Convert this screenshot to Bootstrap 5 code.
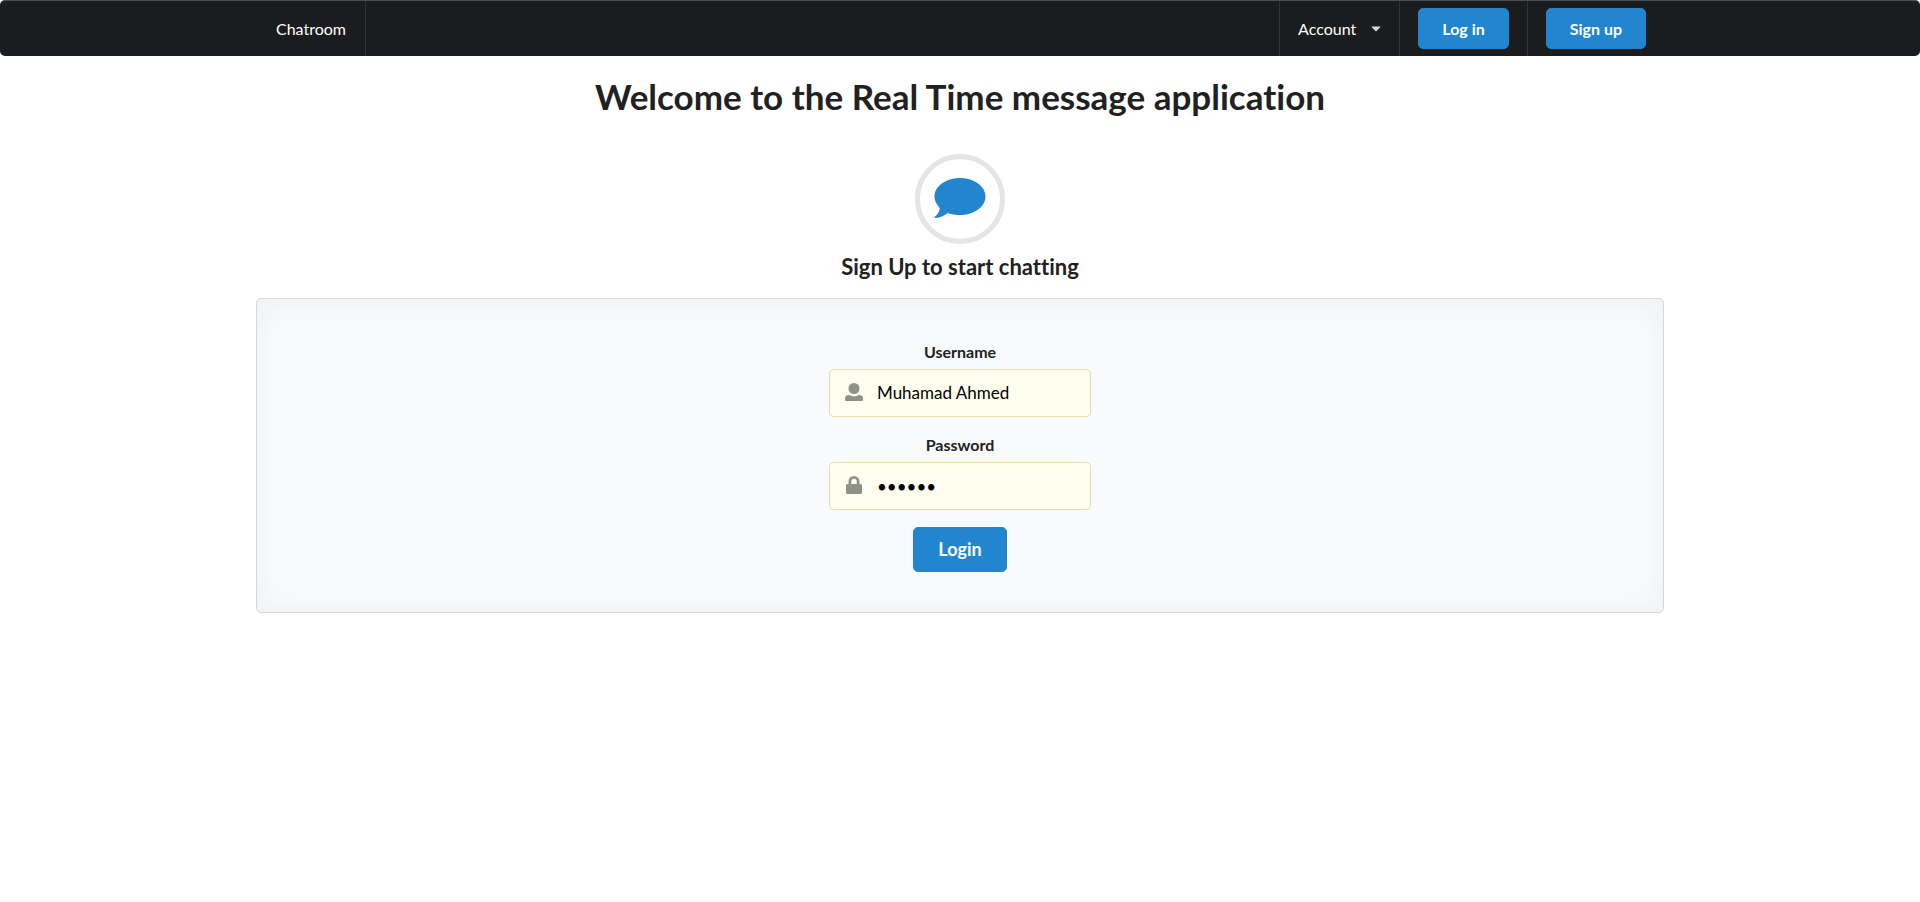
<!DOCTYPE html>
<html lang="en">
<head>
<meta charset="utf-8">
<meta name="viewport" content="width=device-width, initial-scale=1">
<title>Chatroom</title>
<link href="https://cdn.jsdelivr.net/npm/bootstrap@5.3.0/dist/css/bootstrap.min.css" rel="stylesheet">
<style>
  body { font-family: Lato, "Liberation Sans", sans-serif; color: #212121; font-variant-ligatures: no-common-ligatures; }
  .page-width { width: 100%; max-width: 1408px; }
  .topbar { background: #1b1c1d; border-top: 1px solid #4c4d4e; border-radius: 5px; min-height: 56px; font-size: 16px; }
  .topbar-item { display: flex; align-items: center; padding: 0 18px; border-right: 1px solid #323334; color: #fff; text-decoration: none; }
  .topbar-brand { padding: 0 19px 0 20px; }
  .topbar-menu { gap: 15px; background: none; border-width: 0 1px; border-style: solid; border-color: #323334; }
  .topbar-menu svg { fill: #d8d8d8; }
  .btn-brand { --bs-btn-color: #fff; --bs-btn-bg: #2185d0; --bs-btn-border-color: #2185d0; --bs-btn-hover-color: #fff; --bs-btn-hover-bg: #1678c2; --bs-btn-hover-border-color: #1678c2; --bs-btn-border-radius: 5px; --bs-btn-padding-y: 0; font-weight: 700; }
  .btn-top { --bs-btn-padding-x: 23px; --bs-btn-font-size: 16px; height: 41px; }
  .btn-send { --bs-btn-padding-x: 24px; --bs-btn-font-size: 18px; height: 45px; }
  .page-title { font-size: 35px; line-height: 46px; font-weight: 700; margin: 17px 0 35px; }
  .page-subtitle { font-size: 22px; line-height: 28px; font-weight: 700; margin: 9px 0 17px; }
  .round-icon { width: 90px; height: 90px; border: 5px solid #e5e5e5; }
  .panel { background: #f9fafb; border: 1px solid #d7d8d9; border-radius: 5px; box-shadow: inset 0 2px 31px rgba(34,36,38,.05); padding: 42px 16px 40px; }
  .login-form { width: 262px; }
  .login-form label { display: block; font-size: 16px; line-height: 22px; font-weight: 700; margin-bottom: 6px; }
  .login-form .form-control { height: 48px; padding: 0 18px 2px 47px; font-size: 17px; color: #000; background: #fffff0; border: 1px solid #e5dfa1; border-radius: 5px; }
  .login-form .form-control[type=password] { padding-bottom: 0; }
  .login-field { position: relative; margin-bottom: 17px; }
  .field-icon { position: absolute; left: 16px; top: 14px; width: 18px; height: 18px; fill: #8f9087; pointer-events: none; }
</style>
</head>
<body>
<nav class="topbar d-flex">
  <div class="page-width mx-auto d-flex">
    <a class="topbar-item topbar-brand" href="#">Chatroom</a>
    <div class="d-flex ms-auto">
      <button type="button" class="topbar-item topbar-menu">Account
        <svg width="10" height="6" viewBox="0 0 10 6" aria-hidden="true"><path d="M1 .5h8q.8 0 .3.7L5.500 5q-.5.5-1 0L.7 1.200Q.2.5 1 .5z"/></svg>
      </button>
      <div class="topbar-item"><button type="button" class="btn btn-brand btn-top">Log in</button></div>
      <div class="topbar-item border-0"><button type="button" class="btn btn-brand btn-top">Sign up</button></div>
    </div>
  </div>
</nav>
<main class="page-width mx-auto text-center">
  <h1 class="page-title">Welcome to the Real Time message application</h1>
  <div class="round-icon rounded-circle d-flex align-items-center justify-content-center mx-auto">
    <svg width="52" height="42" viewBox="0 0 52 42" fill="#2185d0" aria-hidden="true"><path d="M26 0C11.800 0 .5 8.300 .5 18.600c0 4.300 2 8.200 5.300 11.300C5.500 33.500 3.400 36.800 1 38.600c-.9.700-.4 1.400.5 1.300 5-.3 9-2.200 12.300-4.900 3.700 1.400 7.800 2.100 12.200 2.100 14.200 0 25.500-8.200 25.500-18.500S40.200 0 26 0z"/></svg>
  </div>
  <h2 class="page-subtitle">Sign Up to start chatting</h2>
  <section class="panel">
    <form class="login-form mx-auto">
      <label for="username">Username</label>
      <div class="login-field">
        <input class="form-control" type="text" id="username" value="Muhamad Ahmed">
        <svg class="field-icon" viewBox="0 0 18 18" aria-hidden="true"><circle cx="9" cy="5.500" r="5.500"/><path d="M4 12q5 2.800 10 0c2.800 0 4 1.400 4 4v.8q0 1.200-1.200 1.200H1.200Q0 18 0 16.800V16c0-2.600 1.200-4 4-4z"/></svg>
      </div>
      <label for="password">Password</label>
      <div class="login-field">
        <input class="form-control" type="password" id="password" value="secret">
        <svg class="field-icon" viewBox="0 0 18 18" aria-hidden="true"><path d="M3.500 8V5.500a5.500 5.500 0 0 1 11 0V8h1q1.500 0 1.500 1.500v7q0 1.500-1.500 1.500h-13Q1 18 1 16.500v-7Q1 8 2.500 8zm2.800 0h5.400V5.500a2.700 2.700 0 0 0-5.400 0z"/></svg>
      </div>
      <button type="button" class="btn btn-brand btn-send">Login</button>
    </form>
  </section>
</main>
<script src="https://cdn.jsdelivr.net/npm/bootstrap@5.3.0/dist/js/bootstrap.bundle.min.js"></script>
</body>
</html>
